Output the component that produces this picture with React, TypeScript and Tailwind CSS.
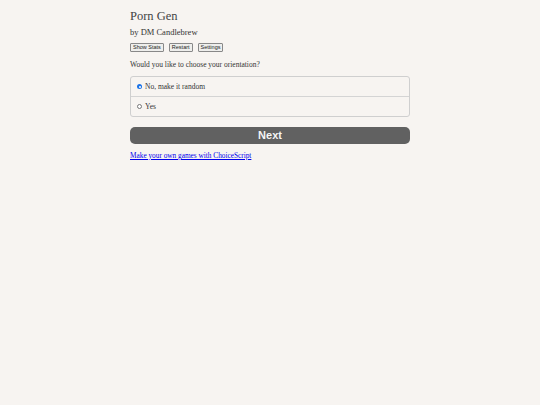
import React from "react";

export default function App() {
  const serif = { fontFamily: '"Liberation Serif", Georgia, serif' };
  return (
    <div className="min-h-[405px] w-full bg-[#f7f4f1] text-[#333]" style={serif}>
      <div className="mx-auto w-[280px] pt-[9px]">
        <h1 className="text-[12.5px] leading-[15px] font-normal text-[#444]">Porn Gen</h1>
        <div className="mt-[3px] text-[8.5px] leading-[10px] text-[#333]">by DM Candlebrew</div>
        <div className="mt-[6px] flex gap-[5px]" style={{ fontFamily: '"Liberation Sans", Arial, sans-serif' }}>
          {["Show Stats", "Restart", "Settings"].map((b) => (
            <button
              key={b}
              className="h-[9px] rounded-[1px] border border-[#888] bg-[#eeeeec] px-[2px] text-[5.5px] leading-[7px] text-[#222]"
            >
              {b}
            </button>
          ))}
        </div>
        <p className="mt-[8px] text-[7.5px] leading-[10px]">Would you like to choose your orientation?</p>
        <div className="mt-[6px] rounded-[3px] border border-[#cfcfcf]">
          <label className="flex h-[20px] items-center gap-[3px] border-b border-[#d4d4d4] pl-[6px] text-[7.5px]">
            <span className="flex h-[5px] w-[5px] items-center justify-center rounded-full bg-[#1a73e8]">
              <span className="h-[2px] w-[2px] rounded-full bg-white" />
            </span>
            No, make it random
          </label>
          <label className="flex h-[19px] items-center gap-[3px] pl-[6px] text-[7.5px]">
            <span className="h-[5px] w-[5px] rounded-full border border-[#777] bg-white" />
            Yes
          </label>
        </div>
        <button
          className="mt-[10px] flex h-[17px] w-full items-center justify-center rounded-[5px] bg-[#616161] text-[11px] font-bold text-[#f5f5f5]"
          style={{ fontFamily: '"Liberation Sans", Arial, sans-serif' }}
        >
          Next
        </button>
        <a href="#" className="mt-[7px] block text-[7.3px] leading-[9px] text-[#0000ee] underline">
          Make your own games with ChoiceScript
        </a>
      </div>
    </div>
  );
}
